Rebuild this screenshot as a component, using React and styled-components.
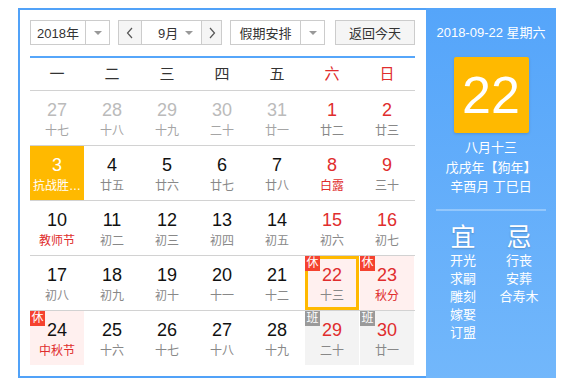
import React from "react";
import styled, { createGlobalStyle } from "styled-components";

const GlobalStyle = createGlobalStyle`
  html, body { margin: 0; padding: 0; background: #fff; }
  body { font-family: "Liberation Sans", "Noto Sans CJK SC", sans-serif; }
`;

const Frame = styled.div`
  display: flex;
  width: 538px;
  height: 370px;
  margin: 8px 0 0 18px;
`;

const Main = styled.div`
  box-sizing: border-box;
  width: 408px;
  height: 370px;
  border: 2px solid #51a2f8;
  border-right: none;
  padding: 10px 11px 0 10px;
`;

const Toolbar = styled.div`
  display: flex;
  height: 25px;
  align-items: stretch;
`;

const Group = styled.div`
  display: flex;
  box-sizing: border-box;
  height: 25px;
  border: 1px solid #ccc;
  margin-left: ${(p) => p.$ml || 0}px;
  background: #fff;
`;

const Value = styled.div`
  box-sizing: border-box;
  width: ${(p) => p.$w}px;
  display: flex;
  align-items: center;
  justify-content: ${(p) => (p.$arrow ? "space-between" : "center")};
  padding: ${(p) => (p.$arrow ? "0 8px 0 16px" : "0")};
  font-size: 13px;
  color: #333;
  border-right: ${(p) => (p.$divider ? "1px solid #ccc" : "none")};
`;

const ArrowCell = styled.div`
  width: ${(p) => p.$w}px;
  display: flex;
  align-items: center;
  justify-content: center;
`;

const Caret = styled.span`
  width: 0;
  height: 0;
  border-left: 4px solid transparent;
  border-right: 4px solid transparent;
  border-top: 4px solid #999;
`;

const NavBtn = styled.div`
  box-sizing: border-box;
  width: ${(p) => p.$w}px;
  display: flex;
  align-items: center;
  justify-content: center;
  background: #f5f5f5;
  border-${(p) => p.$side}: 1px solid #ccc;
`;

const TodayBtn = styled.div`
  box-sizing: border-box;
  width: 82px;
  height: 25px;
  margin-left: 10px;
  border: 1px solid #ccc;
  background: #f5f5f5;
  display: flex;
  align-items: center;
  justify-content: center;
  font-size: 13px;
  color: #333;
`;

const BlueLine = styled.div`
  height: 2px;
  background: #56a6fa;
  margin-top: 11px;
`;

const WeekHead = styled.div`
  display: grid;
  grid-template-columns: repeat(7, 54px);
  column-gap: 1px;
  height: 32px;
  align-items: center;
`;

const WeekDay = styled.div`
  text-align: center;
  font-size: 15px;
  line-height: 32px;
  color: ${(p) => (p.$red ? "#e02d2d" : "#333")};
`;

const Row = styled.div`
  display: grid;
  grid-template-columns: repeat(7, 54px);
  column-gap: 1px;
  border-top: 1px solid #d2d2d2;
`;

const Cell = styled.div`
  position: relative;
  box-sizing: border-box;
  height: 54px;
  padding-top: ${(p) => (p.$selected ? 6 : 9)}px;
  display: flex;
  flex-direction: column;
  align-items: center;
  background: ${(p) => p.$bg || "transparent"};
  border: ${(p) => (p.$selected ? "3px solid #ffb900" : "none")};
`;

const Num = styled.div`
  font-size: 18px;
  line-height: 20px;
  color: ${(p) => p.$color};
`;

const Lunar = styled.div`
  margin-top: 3px;
  font-size: 12px;
  line-height: 16px;
  color: ${(p) => p.$color};
  white-space: nowrap;
`;

const Badge = styled.span`
  position: absolute;
  left: ${(p) => (p.$selected ? -3 : 0)}px;
  top: ${(p) => (p.$selected ? -3 : 0)}px;
  width: 15px;
  height: 15px;
  background: ${(p) => (p.$work ? "#9a9a9a" : "#f5422f")};
  color: #fff;
  font-size: 12px;
  line-height: 15px;
  text-align: center;
`;

const Panel = styled.div`
  width: 130px;
  height: 370px;
  background: linear-gradient(#55a5fa, #72b7fb);
  color: #fff;
  display: flex;
  flex-direction: column;
  align-items: center;
`;

const DateLine = styled.div`
  margin-top: 16px;
  font-size: 13px;
  line-height: 18px;
`;

const BigDay = styled.div`
  margin-top: 15px;
  width: 75px;
  height: 76px;
  background: #ffb900;
  border-radius: 2px;
  box-shadow: 0 1px 3px rgba(0, 0, 0, 0.15);
  font-size: 52px;
  line-height: 76px;
  text-align: center;
  color: #fff;
`;

const LunarInfo = styled.div`
  margin-top: 5px;
  font-size: 13px;
  line-height: 19.5px;
  text-align: center;
  white-space: nowrap;
`;

const Divider = styled.div`
  align-self: stretch;
  margin: 12px 10px 0;
  height: 2px;
  background: rgba(255, 255, 255, 0.3);
`;

const Columns = styled.div`
  display: flex;
  justify-content: center;
  margin-top: 11px;
`;

const Col = styled.div`
  width: 56px;
  text-align: center;
`;

const ColHead = styled.div`
  font-size: 25px;
  line-height: 30px;
  font-weight: normal;
  text-shadow: 0 1px 2px rgba(0, 0, 0, 0.2);
`;

const Item = styled.div`
  font-size: 13px;
  line-height: 18px;
  white-space: nowrap;
`;

const RED = "#e02d2d";

const rows = [
  [
    { n: 27, l: "十七", prev: true },
    { n: 28, l: "十八", prev: true },
    { n: 29, l: "十九", prev: true },
    { n: 30, l: "二十", prev: true },
    { n: 31, l: "廿一", prev: true },
    { n: 1, l: "廿二", we: true },
    { n: 2, l: "廿三", we: true },
  ],
  [
    { n: 3, l: "抗战胜…", today: true },
    { n: 4, l: "廿五" },
    { n: 5, l: "廿六" },
    { n: 6, l: "廿七" },
    { n: 7, l: "廿八" },
    { n: 8, l: "白露", we: true, fest: true },
    { n: 9, l: "三十", we: true },
  ],
  [
    { n: 10, l: "教师节", fest: true },
    { n: 11, l: "初二" },
    { n: 12, l: "初三" },
    { n: 13, l: "初四" },
    { n: 14, l: "初五" },
    { n: 15, l: "初六", we: true },
    { n: 16, l: "初七", we: true },
  ],
  [
    { n: 17, l: "初八" },
    { n: 18, l: "初九" },
    { n: 19, l: "初十" },
    { n: 20, l: "十一" },
    { n: 21, l: "十二" },
    { n: 22, l: "十三", we: true, rest: true, selected: true },
    { n: 23, l: "秋分", we: true, rest: true, fest: true },
  ],
  [
    { n: 24, l: "中秋节", rest: true, fest: true },
    { n: 25, l: "十六" },
    { n: 26, l: "十七" },
    { n: 27, l: "十八" },
    { n: 28, l: "十九" },
    { n: 29, l: "二十", we: true, work: true },
    { n: 30, l: "廿一", we: true, work: true },
  ],
];

function Day({ d }) {
  let numColor = "#111";
  let lunColor = "#888";
  let bg;
  if (d.prev) {
    numColor = "#bbb";
    lunColor = "#a5a5a5";
  }
  if (d.we) numColor = RED;
  if (d.fest) lunColor = RED;
  if (d.rest) bg = "#fff0ef";
  if (d.work) bg = "#f3f3f3";
  if (d.today) {
    bg = "#ffb900";
    numColor = "#fff";
    lunColor = "#fff";
  }
  return (
    <Cell $bg={bg} $selected={d.selected}>
      {d.rest && <Badge $selected={d.selected}>休</Badge>}
      {d.work && <Badge $work>班</Badge>}
      <Num $color={numColor}>{d.n}</Num>
      <Lunar $color={lunColor}>{d.l}</Lunar>
    </Cell>
  );
}

function Chevron({ dir }) {
  return (
    <svg width="8" height="12" viewBox="0 0 8 12">
      <path
        d={dir === "left" ? "M6 1 L1.5 6 L6 11" : "M2 1 L6.5 6 L2 11"}
        fill="none"
        stroke="#555"
        strokeWidth="1.2"
      />
    </svg>
  );
}

const weekdays = ["一", "二", "三", "四", "五", "六", "日"];

export default function App() {
  return (
    <>
      <GlobalStyle />
      <Frame>
        <Main>
          <Toolbar>
            <Group>
              <Value $w={55} $divider>2018年</Value>
              <ArrowCell $w={23}>
                <Caret />
              </ArrowCell>
            </Group>
            <Group $ml={8}>
              <NavBtn $w={23} $side="right">
                <Chevron dir="left" />
              </NavBtn>
              <Value $w={59} $arrow>
                <span>9月</span>
                <Caret />
              </Value>
              <NavBtn $w={20} $side="left">
                <Chevron dir="right" />
              </NavBtn>
            </Group>
            <Group $ml={8}>
              <Value $w={70} $divider>假期安排</Value>
              <ArrowCell $w={23}>
                <Caret />
              </ArrowCell>
            </Group>
            <TodayBtn>返回今天</TodayBtn>
          </Toolbar>
          <BlueLine />
          <WeekHead>
            {weekdays.map((w, i) => (
              <WeekDay key={w} $red={i >= 5}>
                {w}
              </WeekDay>
            ))}
          </WeekHead>
          {rows.map((r, i) => (
            <Row key={i}>
              {r.map((d, j) => (
                <Day key={j} d={d} />
              ))}
            </Row>
          ))}
        </Main>
        <Panel>
          <DateLine>2018-09-22 星期六</DateLine>
          <BigDay>22</BigDay>
          <LunarInfo>
            八月十三
            <br />
            戊戌年【狗年】
            <br />
            辛酉月 丁巳日
          </LunarInfo>
          <Divider />
          <Columns>
            <Col>
              <ColHead>宜</ColHead>
              <Item>开光</Item>
              <Item>求嗣</Item>
              <Item>雕刻</Item>
              <Item>嫁娶</Item>
              <Item>订盟</Item>
            </Col>
            <Col>
              <ColHead>忌</ColHead>
              <Item>行丧</Item>
              <Item>安葬</Item>
              <Item>合寿木</Item>
            </Col>
          </Columns>
        </Panel>
      </Frame>
    </>
  );
}
